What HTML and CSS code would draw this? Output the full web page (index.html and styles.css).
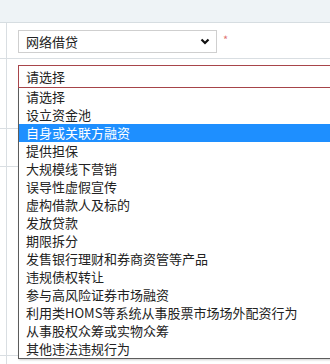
FILE: index.html
```html
<!DOCTYPE html>
<html lang="zh-CN">
<head>
    <meta charset="UTF-8">
    <title>风险类型</title>
    <link rel="stylesheet" href="styles.css">
</head>
<body>
    <div class="topbar"></div>
    <div class="form">
        <div class="row row-1">
            <div class="label"></div>
            <div class="field">
                <div class="select">
                    <span>网络借贷</span>
                    <svg class="chevron" width="10" height="7" viewBox="0 0 10 7">
                        <polyline points="1.5,1.5 5,5 8.5,1.5" fill="none" stroke="#111" stroke-width="2.2"/>
                    </svg>
                </div>
                <span class="required">*</span>
            </div>
        </div>
        <div class="row row-2">
            <div class="label"></div>
            <div class="field">
                <div class="select select-open">
                    <span>请选择</span>
                </div>
                <ul class="options">
                    <li>请选择</li>
                    <li>设立资金池</li>
                    <li class="active">自身或关联方融资</li>
                    <li>提供担保</li>
                    <li>大规模线下营销</li>
                    <li>误导性虚假宣传</li>
                    <li>虚构借款人及标的</li>
                    <li>发放贷款</li>
                    <li>期限拆分</li>
                    <li>发售银行理财和券商资管等产品</li>
                    <li>违规债权转让</li>
                    <li>参与高风险证券市场融资</li>
                    <li>利用类HOMS等系统从事股票市场场外配资行为</li>
                    <li>从事股权众筹或实物众筹</li>
                    <li>其他违法违规行为</li>
                </ul>
            </div>
        </div>
        <div class="row row-3"><div class="label"></div><div class="field"></div></div>
        <div class="row row-4"><div class="label"></div><div class="field"></div></div>
        <div class="row row-5"><div class="label"></div><div class="field"></div></div>
    </div>
</body>
</html>
```

FILE: styles.css
```css
html, body {
    overflow: hidden;
}
body {
    margin: 0;
    font-family: "Noto Sans CJK SC", "Microsoft YaHei", sans-serif;
    font-size: 13px;
    color: #222;
    background: #fff;
}
.topbar {
    height: 22px;
    background: #eef3f6;
    border-bottom: 1px solid #d6dde1;
}
.row {
    display: flex;
    border-bottom: 1px solid #d9dee2;
}
.row-5 {
    border-bottom: none;
}
.label {
    flex: none;
    width: 6px;
    border-right: 1px solid #d9dee2;
}
.field {
    position: relative;
    flex: 1;
    min-width: 0;
    display: flex;
    align-items: flex-start;
    padding-left: 11px;
}
.row-1 { height: 35px; }
.row-1 .field { padding-top: 7px; }
.row-2 { height: 69px; }
.row-2 .field { padding-top: 6px; }
.row-3 { height: 37px; }
.row-4 { height: 188px; }
.row-5 { height: 8px; }
.select {
    box-sizing: border-box;
    height: 23px;
    width: 199px;
    flex: none;
    border: 1px solid #cfcfcf;
    background: #fff;
    display: flex;
    align-items: center;
    padding-left: 7px;
    padding-right: 6px;
    line-height: 18px;
}
.select span {
    flex: 1;
}
.chevron {
    display: block;
}
.required {
    color: #e07474;
    font-size: 11px;
    margin-left: 6px;
    margin-top: 1px;
}
.select-open {
    width: 313px;
    border: 1px solid #a8454a;
}
.options {
    position: absolute;
    top: 29px;
    left: 11px;
    width: 313px;
    box-sizing: border-box;
    margin: 0;
    padding: 0;
    list-style: none;
    background: #fff;
    border: 1px solid #5c5c5c;
    border-top: none;
    box-shadow: 1px 1px 2px rgba(0, 0, 0, 0.2);
}
.options li {
    height: 18px;
    line-height: 18px;
    padding-left: 7px;
    white-space: nowrap;
}
.options li.active {
    background: #1e8fff;
    color: #fff;
}
```
